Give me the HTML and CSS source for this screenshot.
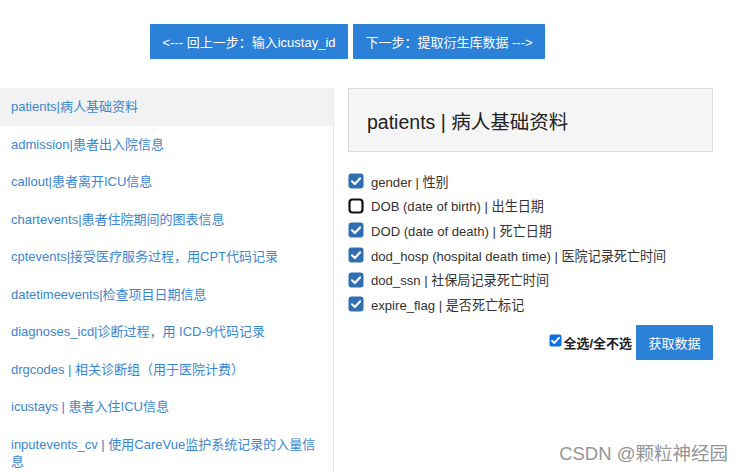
FILE: index.html
```html
<!DOCTYPE html>
<html lang="zh">
<head>
<meta charset="utf-8">
<title>patients</title>
<link rel="stylesheet" href="styles.css">
</head>
<body>
<div class="toolbar">
  <button class="btn">&lt;--- 回上一步：输入icustay_id</button>
  <button class="btn">下一步：提取衍生库数据 ---&gt;</button>
</div>
<div class="main">
  <ul class="tables">
    <li class="active"><a>patients|病人基础资料</a></li>
    <li><a>admission|患者出入院信息</a></li>
    <li><a>callout|患者离开ICU信息</a></li>
    <li><a>chartevents|患者住院期间的图表信息</a></li>
    <li><a>cptevents|接受医疗服务过程，用CPT代码记录</a></li>
    <li><a>datetimeevents|检查项目日期信息</a></li>
    <li><a>diagnoses_icd|诊断过程，用 ICD-9代码记录</a></li>
    <li><a>drgcodes | 相关诊断组（用于医院计费）</a></li>
    <li><a>icustays | 患者入住ICU信息</a></li>
    <li><a>inputevents_cv | 使用CareVue监护系统记录的入量信息</a></li>
  </ul>
  <div class="detail">
    <div class="title-box"><h3>patients | 病人基础资料</h3></div>
    <div class="fields">
      <label class="field"><span class="cb on"><svg viewBox="0 0 16 16" width="16" height="16"><rect x="0.5" y="0.5" width="15" height="15" rx="3" fill="#2f6eb2"/><path d="M4 8.3 L6.8 11 L12 5.4" fill="none" stroke="#fff" stroke-width="2.2" stroke-linecap="round" stroke-linejoin="round"/></svg></span>gender | 性别</label>
      <label class="field"><span class="cb"><svg viewBox="0 0 16 16" width="16" height="16"><rect x="1.5" y="1.5" width="13" height="13" rx="3" fill="#fff" stroke="#111" stroke-width="2.2"/></svg></span>DOB (date of birth) | 出生日期</label>
      <label class="field"><span class="cb on"><svg viewBox="0 0 16 16" width="16" height="16"><rect x="0.5" y="0.5" width="15" height="15" rx="3" fill="#2f6eb2"/><path d="M4 8.3 L6.8 11 L12 5.4" fill="none" stroke="#fff" stroke-width="2.2" stroke-linecap="round" stroke-linejoin="round"/></svg></span>DOD (date of death) | 死亡日期</label>
      <label class="field"><span class="cb on"><svg viewBox="0 0 16 16" width="16" height="16"><rect x="0.5" y="0.5" width="15" height="15" rx="3" fill="#2f6eb2"/><path d="M4 8.3 L6.8 11 L12 5.4" fill="none" stroke="#fff" stroke-width="2.2" stroke-linecap="round" stroke-linejoin="round"/></svg></span>dod_hosp (hospital death time) | 医院记录死亡时间</label>
      <label class="field"><span class="cb on"><svg viewBox="0 0 16 16" width="16" height="16"><rect x="0.5" y="0.5" width="15" height="15" rx="3" fill="#2f6eb2"/><path d="M4 8.3 L6.8 11 L12 5.4" fill="none" stroke="#fff" stroke-width="2.2" stroke-linecap="round" stroke-linejoin="round"/></svg></span>dod_ssn | 社保局记录死亡时间</label>
      <label class="field"><span class="cb on"><svg viewBox="0 0 16 16" width="16" height="16"><rect x="0.5" y="0.5" width="15" height="15" rx="3" fill="#2f6eb2"/><path d="M4 8.3 L6.8 11 L12 5.4" fill="none" stroke="#fff" stroke-width="2.2" stroke-linecap="round" stroke-linejoin="round"/></svg></span>expire_flag | 是否死亡标记</label>
    </div>
    <div class="actions">
      <label class="all"><span class="cb-small"><svg viewBox="0 0 13 13" width="13" height="13"><rect x="0.5" y="0.5" width="12" height="12" rx="2" fill="#0a6fe0"/><path d="M3 6.8 L5.3 9 L10 3.8" fill="none" stroke="#fff" stroke-width="1.9" stroke-linecap="round" stroke-linejoin="round"/></svg></span>全选/全不选</label>
      <button class="btn fetch">获取数据</button>
    </div>
  </div>
</div>
<div class="watermark">CSDN @颗粒神经园</div>
</body>
</html>
```
FILE: styles.css
```css
html, body {
  margin: 0;
  padding: 0;
  background: #fff;
  font-family: "Liberation Sans", "Noto Sans CJK SC", sans-serif;
  font-size: 13px;
  color: #333;
}
body {
  position: relative;
  width: 742px;
  height: 472px;
  overflow: hidden;
}
.toolbar {
  display: flex;
  gap: 5px;
  padding: 24px 0 0 150px;
  height: 35px;
}
.btn {
  border: none;
  background: #2b80d8;
  color: #fff;
  font-family: "Liberation Sans", "Noto Sans CJK SC", sans-serif;
  font-size: 13px;
  height: 35px;
  padding: 0;
  white-space: nowrap;
  border-radius: 1px;
  cursor: pointer;
}
.toolbar .btn:first-child { width: 198px; }
.toolbar .btn:last-child { width: 192px; }
.main {
  display: flex;
  margin-top: 29px;
}
.tables {
  list-style: none;
  margin: 0;
  padding: 0;
  width: 333px;
  border-right: 1px solid #e6e6e6;
  flex: none;
  height: 400px;
}
.tables li {
  padding: 10px 11px 10px 11px;
  line-height: 17.5px;
}
.tables li.active {
  background: #f2f2f2;
}
.tables a {
  color: #3a86cf;
  font-size: 13px;
}
.detail {
  margin-left: 14px;
  width: 365px;
}
.title-box {
  background: #f5f5f5;
  border: 1px solid #dedede;
  height: 62px;
  display: flex;
  align-items: center;
  padding-left: 18px;
}
.title-box h3 {
  margin: 0;
  font-weight: normal;
  font-size: 19.5px;
  color: #222;
}
.fields {
  display: flex;
  flex-direction: column;
  padding-top: 17px;
}
.field {
  display: flex;
  align-items: center;
  height: 24.6px;
  font-size: 13.1px;
  color: #333;
}
.cb {
  display: inline-flex;
  width: 16px;
  height: 16px;
  margin-right: 7px;
}
.actions {
  display: flex;
  justify-content: flex-end;
  align-items: center;
  margin-top: 8px;
}
.all {
  display: flex;
  align-items: center;
  font-weight: bold;
  font-size: 13px;
  color: #222;
  margin-right: 4px;
}
.cb-small {
  display: inline-flex;
  width: 13px;
  height: 13px;
  margin-right: 1px;
  margin-top: -3px;
}
.btn.fetch {
  width: 77px;
  height: 35px;
  padding: 0;
}
.watermark {
  position: absolute;
  right: 14px;
  bottom: 7px;
  font-size: 18.5px;
  color: #959595;
  text-shadow: 0 0 2px #fff;
}
```
